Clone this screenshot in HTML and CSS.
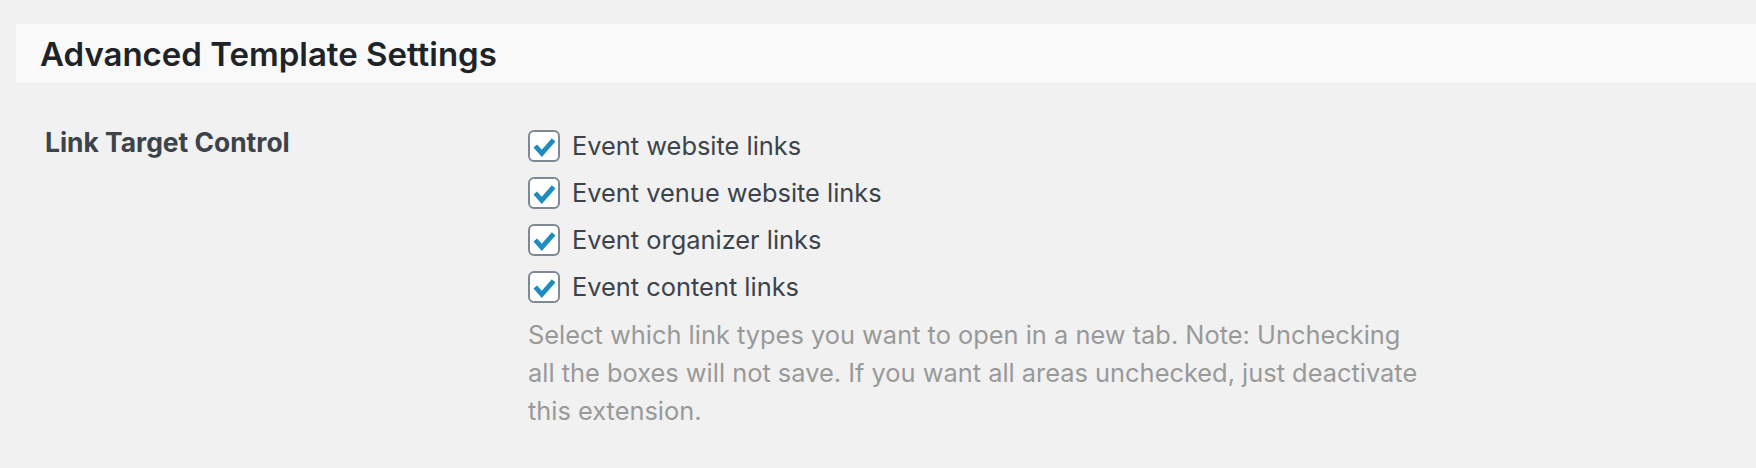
FILE: index.html
```html
<!DOCTYPE html>
<html lang="en">
<head>
    <meta charset="UTF-8">
    <meta name="viewport" content="width=device-width, initial-scale=1.0">
    <title>Advanced Template Settings</title>
    <link rel="stylesheet" href="styles.css">
</head>
<body>
    <div class="wrap">
        <h2 class="section-title">Advanced Template Settings</h2>

        <div class="field-row">
            <div class="field-label">Link Target Control</div>
            <div class="field-input">
                <label class="check-item">
                    <span class="checkbox"><svg viewBox="0 0 32 32"><polyline points="6,16 13.5,24.5 27,9"/></svg></span>
                    Event website links
                </label>
                <label class="check-item">
                    <span class="checkbox"><svg viewBox="0 0 32 32"><polyline points="6,16 13.5,24.5 27,9"/></svg></span>
                    Event venue website links
                </label>
                <label class="check-item">
                    <span class="checkbox"><svg viewBox="0 0 32 32"><polyline points="6,16 13.5,24.5 27,9"/></svg></span>
                    Event organizer links
                </label>
                <label class="check-item">
                    <span class="checkbox"><svg viewBox="0 0 32 32"><polyline points="6,16 13.5,24.5 27,9"/></svg></span>
                    Event content links
                </label>
                <p class="description">Select which link types you want to open in a new tab. Note: Unchecking all the boxes will not save. If you want all areas unchecked, just deactivate this extension.</p>
            </div>
        </div>
    </div>
</body>
</html>
```

FILE: styles.css
```css
* {
    margin: 0;
    padding: 0;
    box-sizing: border-box;
}

body {
    font-family: Inter, 'Liberation Sans', sans-serif;
    background: #f1f1f1;
    color: #3c434a;
}

.wrap {
    padding: 24px 0 0 16px;
}

.section-title {
    height: 59px;
    display: flex;
    align-items: center;
    padding-left: 24px;
    background: #f9f9f9;
    box-shadow: 0 1px 2px rgba(0, 0, 0, 0.03);
    color: #1d2327;
    font-size: 33px;
    font-weight: 600;
}

.field-row {
    display: grid;
    grid-template-columns: 483px 1fr;
    padding: 39px 0 0 29px;
}

.field-label {
    font-size: 26.4px;
    font-weight: 700;
    line-height: 40px;
}

.field-input {
    display: flex;
    flex-direction: column;
}

.check-item {
    display: flex;
    align-items: center;
    gap: 12px;
    height: 47px;
    font-size: 25.4px;
}

.checkbox {
    width: 32px;
    height: 32px;
    flex-shrink: 0;
    background: #fff;
    border: 2px solid #7e8993;
    border-radius: 6px;
}

.checkbox svg {
    display: block;
    width: 28px;
    height: 28px;
    fill: none;
    stroke: #1e8cbe;
    stroke-width: 5.5;
}

.description {
    margin-top: 6px;
    width: 900px;
    color: #999;
    font-size: 25.4px;
    line-height: 38px;
}
```
